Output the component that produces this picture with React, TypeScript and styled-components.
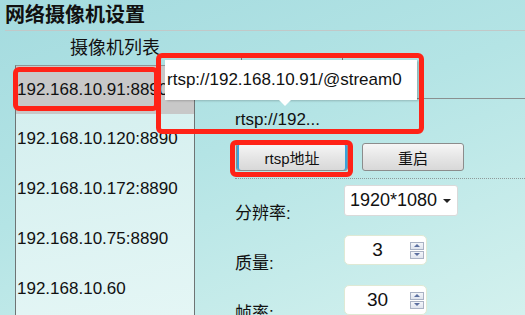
import styled, { createGlobalStyle } from "styled-components";

const GlobalStyle = createGlobalStyle`
  html, body {
    margin: 0;
    padding: 0;
    width: 525px;
    height: 315px;
    overflow: hidden;
    font-family: "Liberation Sans", "Noto Sans CJK SC", sans-serif;
    color: #111;
  }
`;

const Page = styled.div`
  position: relative;
  width: 525px;
  height: 315px;
  overflow: hidden;
  display: flex;
  flex-direction: column;
  background: linear-gradient(160deg, #a4dbdf 0%, #b4e4e5 45%, #d3f1ee 100%);
`;

const TitleBar = styled.div`
  height: 31px;
  box-sizing: border-box;
  margin-left: 5px;
  padding-top: 3px;
  font-size: 20px;
  font-weight: bold;
  line-height: 24px;
  border-bottom: 1px solid #c2c8c8;
`;

const Main = styled.div`
  flex: 1;
  display: flex;
  min-height: 0;
`;

const LeftColumn = styled.div`
  width: 195px;
  flex-shrink: 0;
  display: flex;
  flex-direction: column;
  padding-left: 15px;
  box-sizing: border-box;
`;

const ListHeading = styled.div`
  height: 34px;
  padding-left: 55px;
  padding-top: 7px;
  box-sizing: border-box;
  font-size: 18px;
  line-height: 20px;
`;

const List = styled.div`
  flex: 1;
  border-top: 1px solid #8e9696;
  border-left: 1px solid #6e7474;
  border-right: 1px solid #6e7474;
  background: linear-gradient(170deg, #d2eeee 0%, #e4f6f5 100%);
`;

const ListItem = styled.div<{ $selected?: boolean; $height: number }>`
  height: ${(p) => p.$height}px;
  display: flex;
  align-items: center;
  padding-left: 1px;
  font-size: 17px;
  white-space: nowrap;
  overflow: hidden;
  background: ${(p) => (p.$selected ? "#c8c8c8" : "transparent")};
`;

const RightColumn = styled.div`
  flex: 1;
  display: flex;
  flex-direction: column;
`;

const TabStrip = styled.div`
  height: 68px;
  box-sizing: border-box;
  padding-top: 22px;
  border-bottom: 1px solid #8a9090;
  display: flex;
`;

const Tab = styled.div`
  margin-left: 46px;
  width: 102px;
  height: 46px;
  box-sizing: border-box;
  border: 1px solid #777;
  border-bottom: none;
  border-radius: 3px 3px 0 0;
`;

const Content = styled.div`
  padding-left: 40px;
  display: flex;
  flex-direction: column;
`;

const RtspText = styled.div`
  margin-top: 11px;
  font-size: 17px;
  line-height: 20px;
`;

const ButtonRow = styled.div`
  margin-top: 13px;
  display: flex;
  gap: 14px;
  padding-left: 1px;
`;

const Button = styled.button<{ $width: number; $focused?: boolean }>`
  width: ${(p) => p.$width}px;
  height: 28px;
  box-sizing: border-box;
  border: 1px solid #8c8c8c;
  border-radius: 3px;
  background: linear-gradient(#f6f6f6, #e6e6e6 50%, #d8d8d8);
  font-family: "Liberation Sans", "Noto Sans CJK SC", sans-serif;
  font-size: 15px;
  color: #111;
  padding: 0;
  box-shadow: ${(p) =>
    p.$focused ? "inset 2px 0 0 #3aa3dc, inset -2px 0 0 #3aa3dc" : "none"};
`;

const Divider = styled.div`
  margin-top: 7px;
  border-top: 1px dotted #8f9a9a;
`;

const FormRow = styled.div<{ $first?: boolean }>`
  display: flex;
  height: 50px;
  margin-top: ${(p) => (p.$first ? 6 : 0)}px;
`;

const Label = styled.div`
  width: 109px;
  padding-top: 19px;
  font-size: 17px;
  line-height: 20px;
`;

const Select = styled.div`
  width: 114px;
  height: 31px;
  box-sizing: border-box;
  background: #fff;
  border: 1px solid #dadada;
  border-radius: 3px;
  display: flex;
  align-items: center;
  justify-content: space-between;
  padding: 0 6px 0 5px;
  font-size: 18px;
`;

const Caret = styled.span`
  width: 0;
  height: 0;
  border-left: 4px solid transparent;
  border-right: 4px solid transparent;
  border-top: 4px solid #222;
`;

const Spin = styled.div`
  width: 83px;
  height: 30px;
  box-sizing: border-box;
  background: #fff;
  border: 1px solid #dfe9d4;
  border-radius: 5px;
  display: flex;
  align-items: center;
`;

const SpinValue = styled.div`
  flex: 1;
  text-align: center;
  font-size: 19px;
`;

const SpinArrows = styled.div`
  width: 14px;
  margin-right: 2px;
  display: flex;
  flex-direction: column;
  gap: 1px;
`;

const SpinArrow = styled.div<{ $down?: boolean }>`
  height: 8px;
  box-sizing: border-box;
  border: 1px solid #a9b2c4;
  background: linear-gradient(#f4f6fa, #dfe4ee);
  display: flex;
  align-items: center;
  justify-content: center;
  &::after {
    content: "";
    border-left: 3px solid transparent;
    border-right: 3px solid transparent;
    ${(p) =>
      p.$down ? "border-top: 3px solid #5b6fa0;" : "border-bottom: 3px solid #5b6fa0;"}
  }
`;

const Tooltip = styled.div`
  position: absolute;
  left: 165px;
  top: 60px;
  width: 252px;
  height: 40px;
  box-sizing: border-box;
  background: #fff;
  box-shadow: 2px 1px 2px rgba(0, 0, 0, 0.2);
  font-size: 17px;
  line-height: 40px;
  padding-left: 2px;
  white-space: nowrap;
  &::after {
    content: "";
    position: absolute;
    left: 114px;
    bottom: -6px;
    border-left: 6px solid transparent;
    border-right: 6px solid transparent;
    border-top: 6px solid #fff;
  }
`;

const Highlight = styled.div<{ $x: number; $y: number; $w: number; $h: number }>`
  position: absolute;
  left: ${(p) => p.$x}px;
  top: ${(p) => p.$y}px;
  width: ${(p) => p.$w}px;
  height: ${(p) => p.$h}px;
  box-sizing: border-box;
  border: 5px solid #ff2317;
  border-radius: 6px;
  pointer-events: none;
`;

const cameras = [
  "192.168.10.91:8890",
  "192.168.10.120:8890",
  "192.168.10.172:8890",
  "192.168.10.75:8890",
  "192.168.10.60",
];

export default function App() {
  return (
    <Page>
      <GlobalStyle />
      <TitleBar>网络摄像机设置</TitleBar>
      <Main>
        <LeftColumn>
          <ListHeading>摄像机列表</ListHeading>
          <List>
            {cameras.map((c, i) => (
              <ListItem key={c} $selected={i === 0} $height={i === 0 ? 48 : 50}>
                {c}
              </ListItem>
            ))}
          </List>
        </LeftColumn>
        <RightColumn>
          <TabStrip>
            <Tab />
          </TabStrip>
          <Content>
            <RtspText>rtsp://192...</RtspText>
            <ButtonRow>
              <Button $width={112} $focused>
                rtsp地址
              </Button>
              <Button $width={102}>重启</Button>
            </ButtonRow>
            <Divider />
            <FormRow $first>
              <Label>分辨率:</Label>
              <Select>
                1920*1080
                <Caret />
              </Select>
            </FormRow>
            <FormRow>
              <Label>质量:</Label>
              <Spin>
                <SpinValue>3</SpinValue>
                <SpinArrows>
                  <SpinArrow />
                  <SpinArrow $down />
                </SpinArrows>
              </Spin>
            </FormRow>
            <FormRow>
              <Label>帧率:</Label>
              <Spin>
                <SpinValue>30</SpinValue>
                <SpinArrows>
                  <SpinArrow />
                  <SpinArrow $down />
                </SpinArrows>
              </Spin>
            </FormRow>
          </Content>
        </RightColumn>
      </Main>
      <Tooltip>rtsp://192.168.10.91/@stream0</Tooltip>
      <Highlight $x={13} $y={67} $w={146} $h={44} />
      <Highlight $x={156} $y={53} $w={268} $h={81} />
      <Highlight $x={230} $y={140} $w={123} $h={37} />
    </Page>
  );
}
